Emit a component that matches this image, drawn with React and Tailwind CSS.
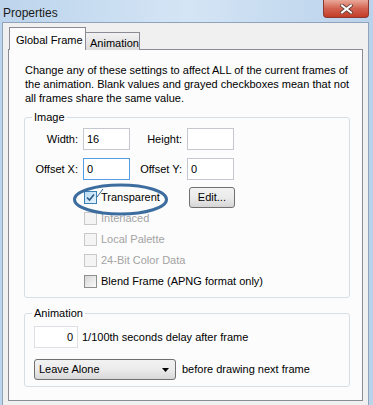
import React from 'react';

const font = { fontFamily: '"Liberation Sans", Arial, sans-serif' };

const CheckBox = ({ checked, disabled }) => (
  <span
    className={`w-[13px] h-[13px] shrink-0 border flex items-center justify-center ${
      disabled
        ? 'border-[#c9c9c9] bg-[#f4f4f4]'
        : checked
        ? 'border-[#3c7fb1] bg-gradient-to-br from-[#b9dcf5] to-[#e6f3fc]'
        : 'border-[#8e8f8f] bg-gradient-to-br from-[#d6d6d6] to-[#fbfbfb]'
    }`}
  >
    {checked && (
      <svg width="9" height="9" viewBox="0 0 9 9">
        <path d="M1 4.5 L3.5 7 L8 1.5" fill="none" stroke="#2a5a8a" strokeWidth="1.6" />
      </svg>
    )}
  </span>
);

const CheckRow = ({ label, checked, disabled, children }) => (
  <div className="h-[21px] flex items-center pl-[59px]">
    <CheckBox checked={checked} disabled={disabled} />
    <span className={`ml-[4px] ${disabled ? 'text-[#a3a3a3]' : 'text-black'}`}>{label}</span>
    {children}
  </div>
);

const TextBox = ({ value, focused, className = '' }) => (
  <div
    className={`h-[22px] border bg-white flex items-center px-[3px] ${
      focused ? 'border-[#569de5]' : 'border-[#c5c9cf]'
    } ${className}`}
  >
    {value}
  </div>
);

export default function App() {
  return (
    <div
      className="w-[373px] h-[405px] overflow-hidden flex flex-col bg-gradient-to-r from-[#bcd4ec] via-[#d4e5f5] to-[#bad2eb] text-[11px] text-black"
      style={font}
    >
      {/* title bar */}
      <div className="h-[22px] shrink-0 flex items-start justify-between pl-[3px] pr-[4px]">
        <span className="mt-[4px] text-[12px] text-[#1a1a1a]">Properties</span>
        <div className="w-[46px] h-[18px] rounded-b-[4px] border border-t-0 border-[#8b3a2f] bg-gradient-to-b from-[#e9a99b] via-[#d2624f] to-[#c33b27] flex items-center justify-center">
          <svg width="13" height="10" viewBox="0 0 13 10">
            <path d="M2 1.5 L11 8.5 M11 1.5 L2 8.5" stroke="#5a3a36" strokeWidth="3.6" strokeLinecap="square" />
            <path d="M2 1.5 L11 8.5 M11 1.5 L2 8.5" stroke="#ffffff" strokeWidth="2" strokeLinecap="square" />
          </svg>
        </div>
      </div>

      {/* client area */}
      <div className="flex-1 ml-[2px] mr-[4px] bg-[#f0f0f0] border-l border-t border-r border-[#8fa3ba] pl-[5px] pt-[4px]">
        {/* tabs */}
        <div className="flex items-end h-[23px] pl-[1px] relative z-10">
          <div className="w-[77px] h-[23px] border border-b-0 border-[#898c95] bg-[#fcfcfc] pl-[6px] pt-[4px]">
            Global Frame
          </div>
          <div className="w-[54px] h-[18px] border border-l-0 border-b-0 border-[#898c95] bg-gradient-to-b from-[#f2f2f2] to-[#dcdcdc] pl-[4px] pt-[2px]">
            Animation
          </div>
        </div>

        {/* tab page */}
        <div className="w-[355px] h-[352px] -mt-[1px] border border-[#898c95] bg-[#fcfcfc] pl-[15px] pt-[13px]">
          <p className="pl-[1px] leading-[14px] w-[330px]">
            Change any of these settings to affect ALL of the current frames of the animation. Blank values and grayed checkboxes mean that not all frames share the same value.
          </p>

          {/* Image group */}
          <fieldset className="mt-[6px] w-[326px] border border-[#d5dfe5] rounded-[3px] pb-[5px] relative">
            <legend className="ml-[7px] px-[2px] leading-[13px]">Image</legend>
            <div className="flex items-center mt-[4px]">
              <span className="w-[53px] text-right">Width:</span>
              <TextBox value="16" className="ml-[5px] w-[47px]" />
              <span className="w-[52px] text-right">Height:</span>
              <TextBox value="" className="ml-[5px] w-[47px]" />
            </div>
            <div className="flex items-center mt-[8px]">
              <span className="w-[53px] text-right">Offset X:</span>
              <TextBox value="0" focused className="ml-[5px] w-[47px]" />
              <span className="w-[52px] text-right">Offset Y:</span>
              <TextBox value="0" className="ml-[5px] w-[47px]" />
            </div>
            <div className="mt-[7px]">
              <CheckRow label="Transparent" checked>
                <button className="ml-[29px] w-[46px] h-[21px] border border-[#707070] rounded-[3px] bg-gradient-to-b from-[#f2f2f2] via-[#ebebeb] to-[#d6d6d6] text-black">
                  Edit...
                </button>
              </CheckRow>
              <CheckRow label="Interlaced" disabled />
              <CheckRow label="Local Palette" disabled />
              <CheckRow label="24-Bit Color Data" disabled />
              <CheckRow label="Blend Frame (APNG format only)" />
            </div>

            {/* hand-drawn annotation */}
            <svg className="absolute left-[47px] top-[59px] pointer-events-none" width="98" height="33" viewBox="0 0 98 33">
              <ellipse cx="48.5" cy="16.5" rx="46" ry="14.5" fill="none" stroke="#3d6d9f" strokeWidth="3" />
              <path d="M25 14 L31 6" stroke="#3d6d9f" strokeWidth="1" />
            </svg>
          </fieldset>

          {/* Animation group */}
          <fieldset className="mt-[9px] w-[326px] border border-[#d5dfe5] rounded-[3px] pb-[6px]">
            <legend className="ml-[7px] px-[2px] leading-[13px]">Animation</legend>
            <div className="flex items-center mt-[6px] pl-[9px]">
              <div className="w-[44px] h-[22px] border border-[#dcdfe3] bg-white flex items-center justify-end pr-[4px]">
                0
              </div>
              <span className="ml-[4px]">1/100th seconds delay after frame</span>
            </div>
            <div className="flex items-center mt-[11px] pl-[9px]">
              <div className="w-[142px] h-[21px] border border-[#707070] rounded-[3px] bg-gradient-to-b from-[#f2f2f2] via-[#ebebeb] to-[#d8d8d8] flex items-center justify-between pl-[4px] pr-[6px]">
                <span>Leave Alone</span>
                <svg width="7" height="4" viewBox="0 0 7 4">
                  <path d="M0 0 H7 L3.5 4 Z" fill="#000" />
                </svg>
              </div>
              <span className="ml-[6px]">before drawing next frame</span>
            </div>
          </fieldset>
        </div>
      </div>
    </div>
  );
}
